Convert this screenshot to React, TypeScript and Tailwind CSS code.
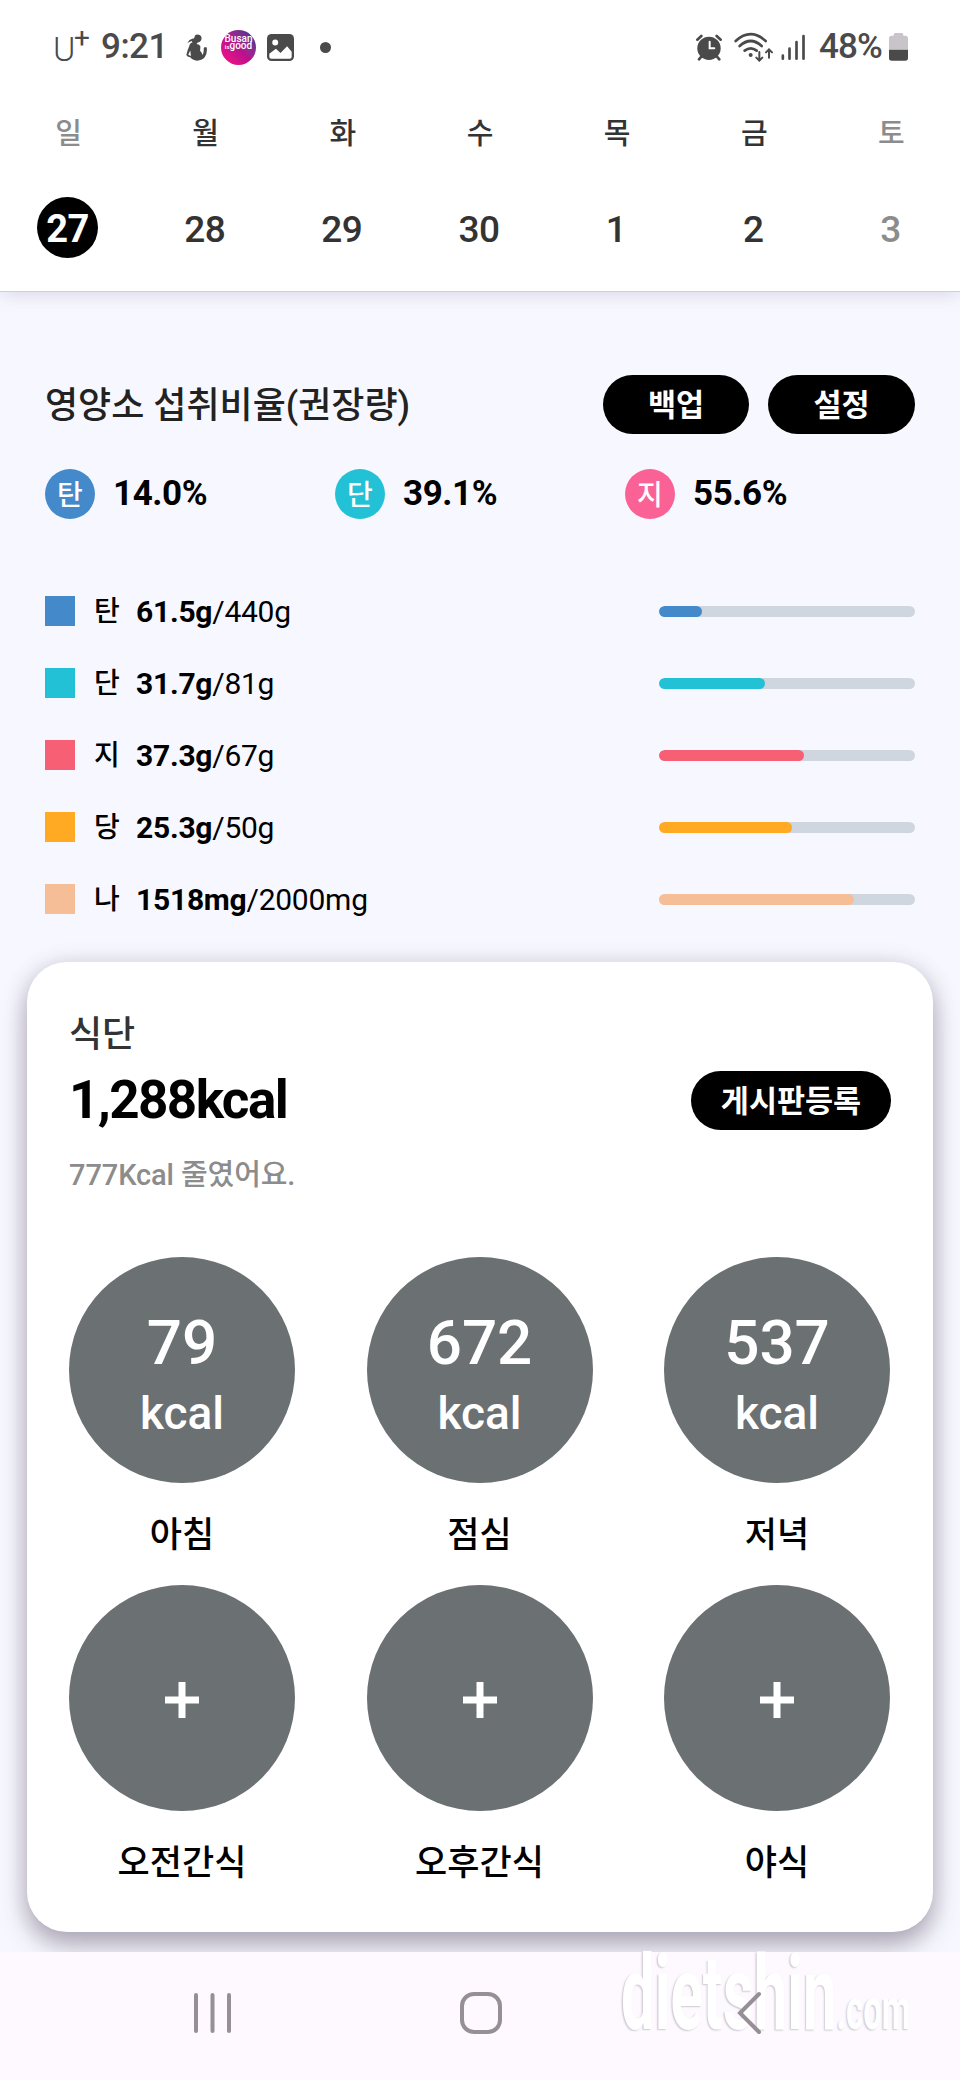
const days = [
  { label: "일", date: "27", muted: true, selected: true },
  { label: "월", date: "28" },
  { label: "화", date: "29" },
  { label: "수", date: "30" },
  { label: "목", date: "1" },
  { label: "금", date: "2" },
  { label: "토", date: "3", muted: true },
];

const ratios = [
  { label: "탄", value: "14.0%", color: "bg-[#448acb]" },
  { label: "단", value: "39.1%", color: "bg-[#23c1d5]" },
  { label: "지", value: "55.6%", color: "bg-[#fa6296]" },
];

const nutrients = [
  { label: "탄", value: "61.5g", goal: "440g", color: "bg-[#448acb]", fill: 43 },
  { label: "단", value: "31.7g", goal: "81g", color: "bg-[#23c1d5]", fill: 106 },
  { label: "지", value: "37.3g", goal: "67g", color: "bg-[#f65f74]", fill: 145 },
  { label: "당", value: "25.3g", goal: "50g", color: "bg-[#ffaa22]", fill: 133 },
  { label: "나", value: "1518mg", goal: "2000mg", color: "bg-[#f6be97]", fill: 195 },
];

const meals = [
  { label: "아침", kcal: 79 },
  { label: "점심", kcal: 672 },
  { label: "저녁", kcal: 537 },
  { label: "오전간식" },
  { label: "오후간식" },
  { label: "야식" },
];

function StatusBar() {
  return (
    <div className="flex h-[94px] items-center justify-between pl-[53px] pr-[52px] text-[#4a4a4a]">
      <div className="flex items-center">
        <div className="flex w-[48px] items-start leading-none">
          <span className="mt-[4px] w-[21px] text-[34px] font-light">U</span>
          <span className="-mt-[4px] text-[28px]">+</span>
        </div>
        <span className="w-[84px] text-[35px] font-medium leading-[40px] tracking-[-0.5px]">9:21</span>
        <svg className="h-[27px] w-[22px]" viewBox="555 103 67 80" fill="currentColor">
          <path d="M584 107q9-7 17-1 7 6 3 15-2 6-10 7l-4 4q10 1 12 8l-1 13q6 5 7 13 5-7 4-21l2-3h7q3 18-6 31-9 10-23 10-15-1-21-10-8 0-12-7l4-15 7-18q2-4 8-5l-3-5-13 6 7-9q9-5 14-5 0-5 3-8z" />
          <path d="M571 152l-6 13 8 4z" fill="#fff" />
        </svg>
        <div className="ml-[14px] flex size-[35px] flex-col items-center overflow-hidden rounded-full bg-linear-to-tr from-[#ff0a80] via-[#b8108c] to-[#2a2a90] pt-[5px] text-[10px] font-medium leading-[7px] text-white">
          <span>Busan</span>
          <span className="whitespace-nowrap">
            <span className="text-[6px]">is</span>good
          </span>
        </div>
        <svg className="ml-[11px] size-[27px]" viewBox="800 101 82 82">
          <rect x="800" y="101" width="82" height="82" rx="14" fill="currentColor" />
          <circle cx="825" cy="127" r="9" fill="#fff" />
          <path d="M807 170v-9l20-15 14 13 20-21 14 17v15q0 6-6 6h-56q-6 0-6-6z" fill="#fff" />
        </svg>
        <span className="ml-[26px] size-[11px] rounded-full bg-[#4a4a4a]" />
      </div>

      <div className="flex items-center">
        <svg className="h-[27px] w-[26px]" viewBox="642 102 78 81" fill="none" stroke="currentColor" strokeWidth="8" strokeLinecap="round">
          <circle cx="681" cy="145" r="35" fill="currentColor" stroke="none" />
          <path d="M646 119l12-11M704 108l12 11M658 170l-7 8M705 170l7 8" />
          <path d="M683 125v20h14" stroke="#fff" strokeWidth="6" />
        </svg>
        <svg className="ml-[12px] h-[30px] w-[40px]" viewBox="758 94 120 90" fill="none" stroke="currentColor" strokeWidth="8" strokeLinecap="round">
          <path d="M763 121q45-41 90 0M775 136q33-30 66 0M790 150q18-14 36 0" />
          <circle cx="808" cy="163" r="6" fill="currentColor" stroke="none" />
          <path d="M834 154v26m-9-9l9 9 9-9M863 171v-25m-9 9l9-9 9 9" strokeWidth="6" />
        </svg>
        <svg className="ml-[7px] h-[27px] w-[25px]" viewBox="902 101 74 81" stroke="currentColor" strokeWidth="8" strokeLinecap="round">
          <path d="M907 166v9M927 145v30M948 125v50M969 107v68" />
        </svg>
        <span className="ml-[13px] w-[70px] text-[35px] font-medium leading-[40px] tracking-[-0.9px]">48%</span>
        <svg className="h-[28px] w-[19px]" viewBox="1224 99 57 84">
          <path d="M1238 107v-3q0-5 5-5h19q5 0 5 5v3h6q8 0 8 8v34h-57v-34q0-8 8-8z" fill="#c9c4ca" />
          <path d="M1224 149h57v25q0 8-8 8h-41q-8 0-8-8z" fill="#4a4a4a" />
        </svg>
      </div>
    </div>
  );
}

function WeekStrip() {
  return (
    <div className="grid grid-cols-7 text-center">
      {days.map((day) => (
        <div key={day.label} className={day.muted ? "text-[#8c8c8c]" : "text-[#333]"}>
          <div className="h-[78px] text-[29px] font-medium leading-[80px]">{day.label}</div>
          <div
            className={
              day.selected
                ? "mx-auto mt-[25px] size-[61px] -translate-x-px rounded-full bg-black text-[38px] font-bold leading-[64px] tracking-[-0.5px] text-white"
                : "mt-[25px] h-[61px] pr-[2px] text-[37px] font-medium leading-[66px] tracking-[-0.5px]"
            }
          >
            {day.date}
          </div>
        </div>
      ))}
    </div>
  );
}

function Pill({ label, className }: { label: string; className: string }) {
  return (
    <button className={`h-[59px] rounded-full bg-black text-center text-[30.5px] font-bold leading-[62px] text-white ${className}`}>
      {label}
    </button>
  );
}

function Nutrition() {
  return (
    <section className="px-[45px] pt-[83px]">
      <div className="flex h-[59px] items-center justify-between">
        <h2 className="pt-[3px] text-[36px] font-medium leading-[56px] text-[#222]">영양소 섭취비율(권장량)</h2>
        <div className="flex gap-[19px]">
          <Pill label="백업" className="w-[146px]" />
          <Pill label="설정" className="w-[147px]" />
        </div>
      </div>

      <div className="mt-[35px] grid grid-cols-3">
        {ratios.map((ratio) => (
          <div key={ratio.label} className="flex items-center">
            <span className={`size-[50px] rounded-full text-center text-[28px] font-medium leading-[54px] text-white ${ratio.color}`}>
              {ratio.label}
            </span>
            <span className="ml-[18px] text-[35px] font-bold leading-[50px] tracking-[-0.4px] text-black">{ratio.value}</span>
          </div>
        ))}
      </div>

      <ul className="mt-[56px]">
        {nutrients.map((item) => (
          <li key={item.label} className="flex h-[72px] items-center text-[30px] leading-[40px] text-black">
            <span className={`size-[30px] ${item.color}`} />
            <span className="ml-[19px] w-[42px] pt-[2px] text-[28px] font-medium">{item.label}</span>
            <span className="grow pt-[2px] tracking-[-0.25px]">
              <b>{item.value}</b>/{item.goal}
            </span>
            <div className="h-[11px] w-[256px] overflow-hidden rounded-full bg-[#cfd6df]">
              <div className={`h-full rounded-full ${item.color}`} style={{ width: item.fill }} />
            </div>
          </li>
        ))}
      </ul>
    </section>
  );
}

function MealCard() {
  return (
    <section className="mx-[27px] mt-[27px] h-[970px] rounded-[40px] bg-white px-[42px] pt-[48px] shadow-[0_0_22px_rgba(80,50,90,0.14),0_14px_26px_rgba(50,35,60,0.34)]">
      <h3 className="text-[36px] font-medium leading-[50px] text-[#333]">식단</h3>
      <div className="mt-[11px] flex items-center justify-between">
        <span className="text-[53px] font-bold leading-[59px] tracking-[-1.6px] text-black">1,288kcal</span>
        <Pill label="게시판등록" className="w-[200px]" />
      </div>
      <p className="mt-[25px] text-[29px] font-medium leading-[40px] tracking-[-0.1px] text-[#8c8c8c]">777Kcal 줄였어요.</p>

      <div className="-mr-[3px] mt-[62px] flex flex-wrap gap-x-[71.5px] gap-y-[24px]">
        {meals.map((meal) => (
          <div key={meal.label} className="w-[226px] text-center">
            <div className="flex size-[226px] flex-col items-center justify-center rounded-full bg-[#6b7073] font-medium text-white">
              {meal.kcal ? (
                <>
                  <span className="pt-[14px] text-[62px] leading-[72px]">{meal.kcal}</span>
                  <span className="text-[46px] leading-[68px]">kcal</span>
                </>
              ) : (
                <svg className="mt-[4px] size-[36px]" viewBox="0 0 36 36" stroke="currentColor" strokeWidth="7">
                  <path d="M1 18h34M18 0v36" />
                </svg>
              )}
            </div>
            <div className="mt-[28px] text-[35px] font-medium leading-[50px] text-black">{meal.label}</div>
          </div>
        ))}
      </div>
    </section>
  );
}

function NavBar() {
  return (
    <nav className="relative mt-[20px] h-[128px] bg-[#fdf9ff]">
      <p className="absolute -top-[10px] left-[621px] origin-top-left scale-x-[0.575] whitespace-nowrap text-[104px] font-bold leading-[104px] text-white [text-shadow:-2px_1px_2px_rgba(90,80,95,0.28)]">
        dietshin<span className="text-[57px] leading-none">.com</span>
      </p>
      <div className="relative flex h-[122px] items-center">
        <svg className="ml-[193px] h-[42px] w-[39px]" viewBox="0 0 39 42" fill="none" stroke="#969096" strokeWidth="4" strokeLinecap="round">
          <path d="M3 3v36M19.500 3v36M36 3v36" />
        </svg>
        <svg className="ml-[228px] size-[42px]" viewBox="0 0 42 42" fill="none" stroke="#969096" strokeWidth="4">
          <rect x="2" y="2" width="38" height="38" rx="12" />
        </svg>
        <svg className="ml-[235px] h-[44px] w-[26px]" viewBox="0 0 26 44" fill="none" stroke="#969096" strokeWidth="4" strokeLinecap="round">
          <path d="M22 3L3 22l19 19" />
        </svg>
      </div>
    </nav>
  );
}

export default function App() {
  return (
    <div className="h-[2080px] w-[960px] overflow-hidden bg-[#f7f8ff] font-['Roboto','Noto_Sans_CJK_KR',sans-serif]">
      <header className="relative h-[292px] border-b border-[#d3d0d8] bg-white shadow-[0_2px_18px_rgba(100,70,130,0.2)]">
        <StatusBar />
        <WeekStrip />
      </header>
      <Nutrition />
      <MealCard />
      <NavBar />
    </div>
  );
}
